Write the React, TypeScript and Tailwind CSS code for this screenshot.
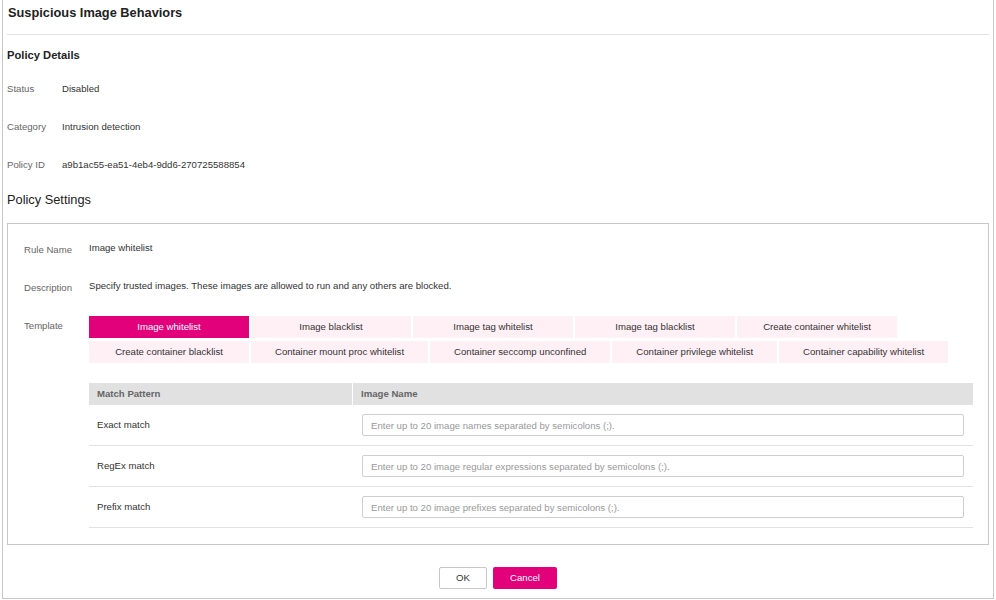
import React, { FC, useState } from "react";

const templates: string[] = [
  "Image whitelist",
  "Image blacklist",
  "Image tag whitelist",
  "Image tag blacklist",
  "Create container whitelist",
  "Create container blacklist",
  "Container mount proc whitelist",
  "Container seccomp unconfined",
  "Container privilege whitelist",
  "Container capability whitelist",
];

const patterns = [
  { name: "Exact match", hint: "Enter up to 20 image names separated by semicolons (;)." },
  { name: "RegEx match", hint: "Enter up to 20 image regular expressions separated by semicolons (;)." },
  { name: "Prefix match", hint: "Enter up to 20 image prefixes separated by semicolons (;)." },
];

const DetailRow: FC<{ label: string; value: string }> = ({ label, value }) => {
  return (
    <div className="flex items-start text-[9.6px] leading-[16px]">
      <span className="w-[55px] text-[#666]">{label}</span>
      <span className="text-[#333]">{value}</span>
    </div>
  );
};

const SettingRow: FC<{ label: string; children: React.ReactNode }> = ({ label, children }) => {
  return (
    <div className="flex items-start text-[9.6px] leading-[16px]">
      <span className="w-[65px] shrink-0 pt-[2px] text-[#666]">{label}</span>
      <div className="flex-1">{children}</div>
    </div>
  );
};

const App: FC = () => {
  const [active, setActive] = useState(0);

  return (
    <div
      className="min-h-screen bg-white"
      style={{ fontFamily: '"Liberation Sans", Arial, sans-serif' }}
    >
      <div className="ml-[2px] w-[992px] border-x border-b border-[#c8c8c8] px-[4px] pb-[9px]">
        <div className="h-[35px] border-b border-[#e2e2e2] pt-[5px] pl-[1px]">
          <h1 className="text-[12.8px] font-bold leading-[16px] text-[#222]">Suspicious Image Behaviors</h1>
        </div>

        <h2 className="mt-[12px] text-[11.2px] font-bold leading-[16px] text-[#222]">Policy Details</h2>
        <div className="mt-[18px] flex flex-col gap-[22px]">
          <DetailRow label="Status" value="Disabled" />
          <DetailRow label="Category" value="Intrusion detection" />
          <DetailRow label="Policy ID" value="a9b1ac55-ea51-4eb4-9dd6-270725588854" />
        </div>

        <h2 className="mt-[18px] text-[12.8px] leading-[18px] text-[#222]">Policy Settings</h2>

        <div className="mt-[14px] border border-[#c8c8c8] pt-[16px] pr-[15px] pb-[16px] pl-[16px]">
          <div className="flex flex-col gap-[20px]">
            <SettingRow label="Rule Name">
              <span className="text-[#333]">Image whitelist</span>
            </SettingRow>
            <SettingRow label="Description">
              <span className="text-[#333]">
                Specify trusted images. These images are allowed to run and any others are blocked.
              </span>
            </SettingRow>
            <SettingRow label="Template">
              <div className="flex flex-wrap gap-x-[2px] gap-y-[3px]">
                {templates.map((t, i) => (
                  <button
                    key={t}
                    onClick={() => setActive(i)}
                    className={
                      i === active
                        ? "h-[22px] min-w-[160px] bg-[#e3007b] px-[24px] text-[9.6px] text-white"
                        : "h-[22px] min-w-[160px] bg-[#fff0f6] px-[24px] text-[9.6px] text-[#333]"
                    }
                  >
                    {t}
                  </button>
                ))}
              </div>

              <div className="mt-[20px]">
                <div className="flex h-[22px] bg-[#e1e1e1] font-bold text-[#666]">
                  <div className="flex w-[264px] items-center border-r border-white pl-[8px]">Match Pattern</div>
                  <div className="flex flex-1 items-center pl-[8px]">Image Name</div>
                </div>
                {patterns.map((p) => (
                  <div key={p.name} className="flex h-[41px] items-center border-b border-[#e2e2e2]">
                    <div className="w-[265px] pl-[8px] text-[#333]">{p.name}</div>
                    <div className="flex-1 pl-[8px] pr-[9px]">
                      <input
                        placeholder={p.hint}
                        className="h-[22px] w-full rounded-[2px] border border-[#cfcfcf] px-[8px] text-[9.6px] text-[#333] outline-none placeholder:text-[#999]"
                      />
                    </div>
                  </div>
                ))}
              </div>
            </SettingRow>
          </div>
        </div>

        <div className="mt-[22px] flex justify-center gap-[6px]">
          <button className="h-[22px] w-[48px] rounded-[2px] border border-[#c8c8c8] bg-white text-[9.6px] text-[#333]">
            OK
          </button>
          <button className="h-[22px] w-[64px] rounded-[2px] bg-[#e3007b] text-[9.6px] text-white">
            Cancel
          </button>
        </div>
      </div>
    </div>
  );
};

export default App;
